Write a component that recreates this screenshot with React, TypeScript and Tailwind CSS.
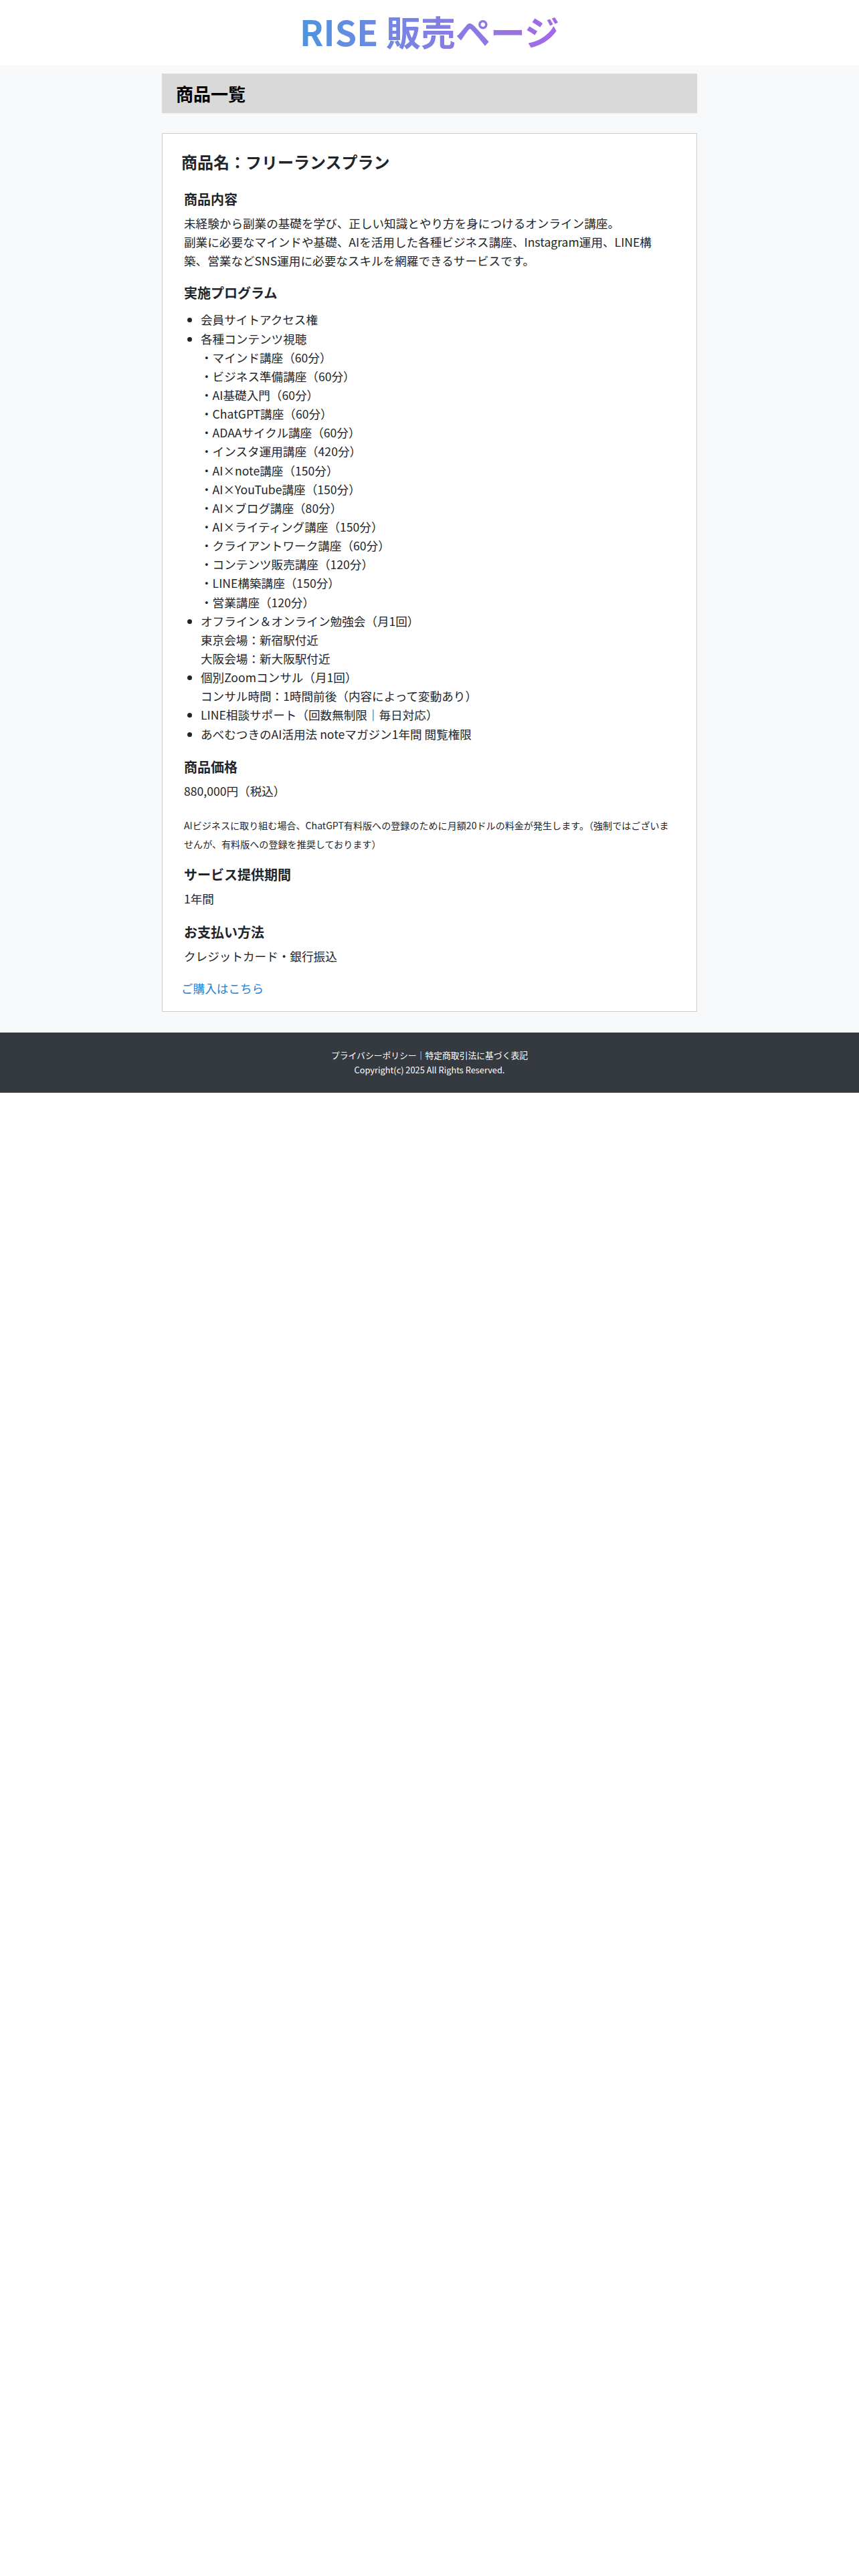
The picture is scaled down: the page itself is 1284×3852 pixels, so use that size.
import React from 'react';

const subCourses = [
  'マインド講座（60分）',
  'ビジネス準備講座（60分）',
  'AI基礎入門（60分）',
  'ChatGPT講座（60分）',
  'ADAAサイクル講座（60分）',
  'インスタ運用講座（420分）',
  'AI×note講座（150分）',
  'AI×YouTube講座（150分）',
  'AI×ブログ講座（80分）',
  'AI×ライティング講座（150分）',
  'クライアントワーク講座（60分）',
  'コンテンツ販売講座（120分）',
  'LINE構築講座（150分）',
  '営業講座（120分）',
];

const Section: React.FC<{ title: string; children: React.ReactNode; className?: string }> = ({ title, children, className }) => (
  <section className={`px-1 ${className ?? ''}`}>
    <h3 className="text-[20px] leading-[1.2] font-bold mb-[10px]">{title}</h3>
    {children}
  </section>
);

const App: React.FC = () => {
  return (
    <div
      className="bg-white text-[#212529]"
      style={{ fontFamily: '"Noto Sans CJK JP", "Noto Sans", "DejaVu Sans", sans-serif' }}
    >
      <div className="shadow-[0_4px_16px_rgba(0,0,0,0.16)]">
        <header className="h-[97px] bg-white flex items-center justify-center">
          <h1 className="text-[52px] leading-none font-bold bg-gradient-to-r from-[#4a94e0] to-[#a368e6] bg-clip-text text-transparent pb-1">
            RISE 販売ページ
          </h1>
        </header>

        <main className="bg-[#f8f9fa] pt-[13px] pb-[31px]">
          <div className="w-[800px] mx-auto">
            <div className="bg-[#d9d9d9] px-[21px] py-[14px] shadow-[0_1px_2px_rgba(0,0,0,0.05)]">
              <h2 className="text-[26px] leading-[1.2] font-bold text-black">商品一覧</h2>
            </div>

            <div className="mt-[30px] bg-white border border-[#cccccc] px-7 pt-7 pb-5 text-[17.6px] leading-[1.6]">
              <h2 className="text-[24px] leading-[1.2] font-bold mb-[29px]">商品名：フリーランスプラン</h2>

              <Section title="商品内容" className="mb-[22px]">
                <p>
                  未経験から副業の基礎を学び、正しい知識とやり方を身につけるオンライン講座。
                  <br />
                  副業に必要なマインドや基礎、AIを活用した各種ビジネス講座、Instagram運用、LINE構築、営業などSNS運用に必要なスキルを網羅できるサービスです。
                </p>
              </Section>

              <Section title="実施プログラム" className="mb-[23px]">
                <ul className="list-disc pl-[25px] mt-[14px]">
                  <li>会員サイトアクセス権</li>
                  <li>
                    各種コンテンツ視聴
                    {subCourses.map((c) => (
                      <React.Fragment key={c}>
                        <br />・{c}
                      </React.Fragment>
                    ))}
                  </li>
                  <li>
                    オフライン＆オンライン勉強会（月1回）
                    <br />
                    東京会場：新宿駅付近
                    <br />
                    大阪会場：新大阪駅付近
                  </li>
                  <li>
                    個別Zoomコンサル（月1回）
                    <br />
                    コンサル時間：1時間前後（内容によって変動あり）
                  </li>
                  <li>LINE相談サポート（回数無制限｜毎日対応）</li>
                  <li>あべむつきのAI活用法 noteマガジン1年間 閲覧権限</li>
                </ul>
              </Section>

              <Section title="商品価格" className="mb-[21px]">
                <p>880,000円（税込）</p>
                <p className="mt-[22px]">
                  <small className="text-[14.08px]">
                    AIビジネスに取り組む場合、ChatGPT有料版への登録のために月額20ドルの料金が発生します。（強制ではございませんが、有料版への登録を推奨しております）
                  </small>
                </p>
              </Section>

              <Section title="サービス提供期間" className="mb-[24px]">
                <p>1年間</p>
              </Section>

              <Section title="お支払い方法" className="mb-[20px]">
                <p>クレジットカード・銀行振込</p>
              </Section>

              <a href="#" className="text-[#1f7fd6]">ご購入はこちら</a>
            </div>
          </div>
        </main>

        <footer className="bg-[#343a40] text-white text-center text-[12.8px] leading-[20px] py-6">
          <p>プライバシーポリシー｜特定商取引法に基づく表記</p>
          <p className="mt-[2px]">Copyright(c) 2025 All Rights Reserved.</p>
        </footer>
      </div>
    </div>
  );
};

export default App;
